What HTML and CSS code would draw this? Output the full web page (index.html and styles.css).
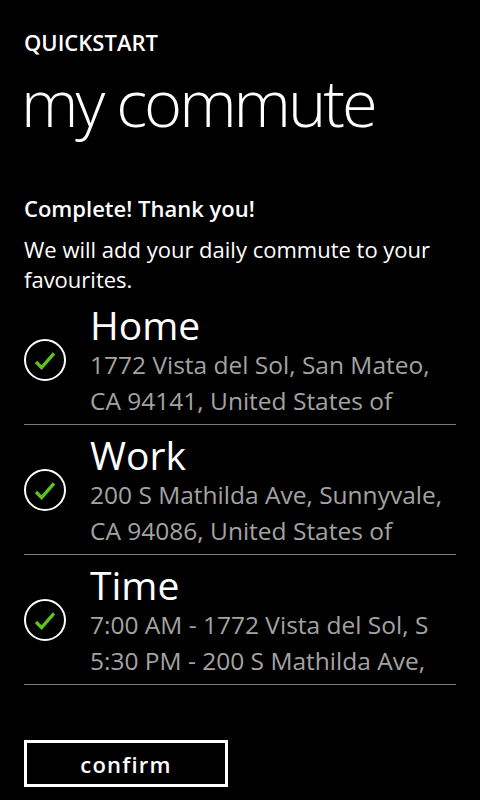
FILE: index.html
```html
<!DOCTYPE html>
<html>
<head>
<meta charset="utf-8">
<link rel="stylesheet" href="styles.css">
</head>
<body>
<div class="page">
  <div class="app-title">QUICKSTART</div>
  <h1 class="page-title">my commute</h1>
  <p class="lead">Complete! Thank you!</p>
  <p class="desc">We will add your daily commute to your favourites.</p>
  <ul class="list">
    <li class="item">
      <svg class="check" viewBox="0 0 44 44" width="44" height="44"><circle cx="22" cy="22" r="20" fill="none" stroke="#fff" stroke-width="2"/><path d="M13 24 L18.6 29.6 L31 15.4" fill="none" stroke="#5cc41e" stroke-width="3.3"/></svg>
      <div class="text">
        <div class="name">Home</div>
        <div class="detail">1772 Vista del Sol, San Mateo,<br>CA 94141, United States of</div>
      </div>
    </li>
    <li class="item">
      <svg class="check" viewBox="0 0 44 44" width="44" height="44"><circle cx="22" cy="22" r="20" fill="none" stroke="#fff" stroke-width="2"/><path d="M13 24 L18.6 29.6 L31 15.4" fill="none" stroke="#5cc41e" stroke-width="3.3"/></svg>
      <div class="text">
        <div class="name">Work</div>
        <div class="detail">200 S Mathilda Ave, Sunnyvale,<br>CA 94086, United States of</div>
      </div>
    </li>
    <li class="item">
      <svg class="check" viewBox="0 0 44 44" width="44" height="44"><circle cx="22" cy="22" r="20" fill="none" stroke="#fff" stroke-width="2"/><path d="M13 24 L18.6 29.6 L31 15.4" fill="none" stroke="#5cc41e" stroke-width="3.3"/></svg>
      <div class="text">
        <div class="name">Time</div>
        <div class="detail">7:00 AM - 1772 Vista del Sol, S<br>5:30 PM - 200 S Mathilda Ave,</div>
      </div>
    </li>
  </ul>
  <button class="confirm">confirm</button>
</div>
</body>
</html>
```
FILE: styles.css
```css
html, body {
  margin: 0;
  padding: 0;
  background: #000;
}
body {
  width: 480px;
  height: 800px;
  overflow: hidden;
  font-family: "Open Sans", "Noto Sans", sans-serif;
  color: #fff;
}
.page {
  padding: 28px 24px 0 24px;
  display: flex;
  flex-direction: column;
  align-items: flex-start;
}
.app-title {
  font-size: 22px;
  font-weight: 600;
  line-height: 29px;
}
.page-title {
  margin: 0 0 0 -3px;
  font-size: 65px;
  font-weight: 300;
  line-height: 90px;
  letter-spacing: -3px;
}
.lead {
  margin: 47px 0 0 0;
  font-size: 22px;
  font-weight: 600;
  line-height: 28px;
}
.desc {
  margin: 12px 0 0 0;
  font-size: 22px;
  line-height: 30px;
  width: 432px;
}
.list {
  list-style: none;
  margin: 1px 0 0 0;
  padding: 0;
  width: 432px;
}
.item {
  display: flex;
  align-items: center;
  height: 129px;
  border-bottom: 1px solid #7c7c7c;
}
.check {
  flex: none;
  margin-left: -1px;
  margin-right: 23px;
}
.text {
  display: flex;
  flex-direction: column;
  align-self: flex-start;
  padding-top: 8px;
}
.name {
  font-size: 39px;
  font-weight: 400;
  line-height: 44px;
}
.detail {
  font-size: 24.5px;
  line-height: 36px;
  color: #a3a3a3;
  white-space: nowrap;
}
.confirm {
  margin-top: 55px;
  width: 204px;
  height: 47px;
  border: 3px solid #fff;
  border-radius: 0;
  background: #000;
  color: #fff;
  font-family: "Open Sans", "Noto Sans", sans-serif;
  font-size: 22px;
  font-weight: 600;
  line-height: 30px;
  letter-spacing: 1.2px;
  padding: 0;
  display: flex;
  align-items: center;
  justify-content: center;
}
```
